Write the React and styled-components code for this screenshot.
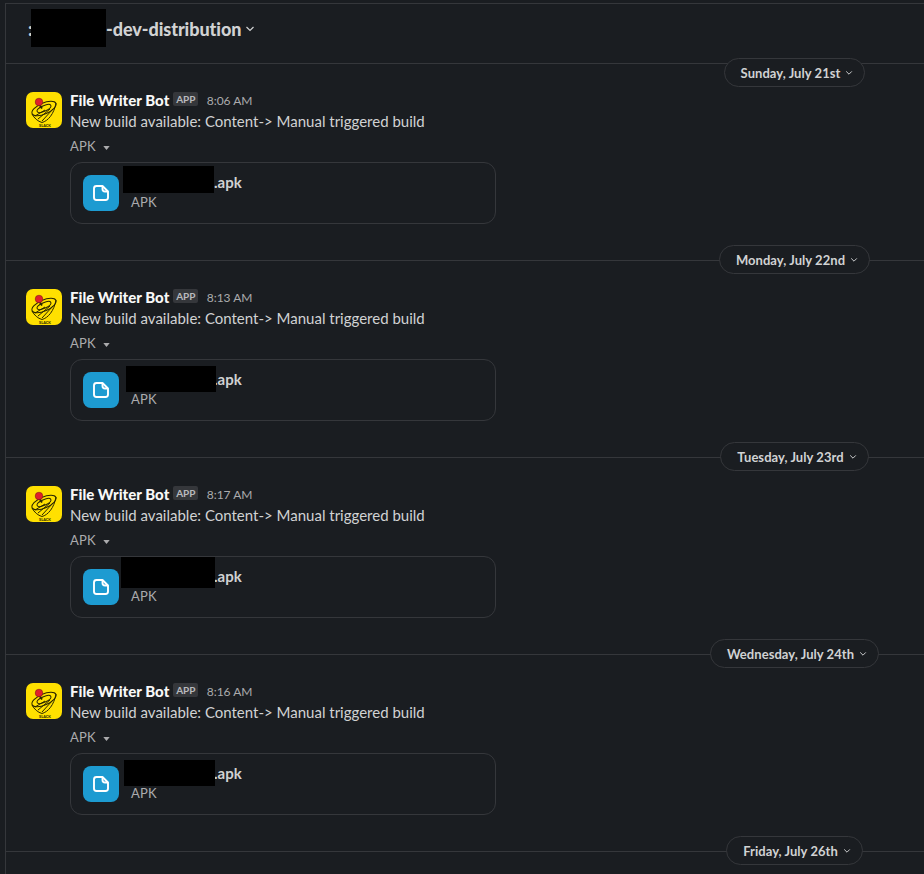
import React from 'react';
import styled, { createGlobalStyle } from 'styled-components';

const GlobalStyle = createGlobalStyle`
  html, body {
    margin: 0;
    padding: 0;
    background: #1a1d21;
  }
  body {
    font-family: Lato, "Noto Sans", sans-serif;
    color: #d1d2d3;
  }
`;

const Page = styled.div`
  width: 924px;
  height: 874px;
  overflow: hidden;
  background: #1a1d21;
  padding-top: 3px;
  box-sizing: border-box;
`;

const Frame = styled.div`
  height: 100%;
  margin-left: 5px;
  border-top: 1px solid #35373b;
  border-left: 1px solid #35373b;
`;

const Header = styled.div`
  display: flex;
  align-items: center;
  box-sizing: border-box;
  height: 59px;
  padding: 0 0 10px 22px;
  font-size: 18px;
  font-weight: 900;
  letter-spacing: -0.06px;
  color: #d1d2d3;
`;

const HeaderName = styled.span`
  position: relative;
  display: inline-block;
  width: 78px;
`;

const Redaction = styled.span`
  position: absolute;
  left: ${(p) => p.$left}px;
  top: ${(p) => p.$top}px;
  width: ${(p) => p.$width}px;
  height: ${(p) => p.$height}px;
  background: #000;
`;

const HeaderCaret = styled.svg`
  width: 10px;
  height: 10px;
  margin-left: 4px;
  margin-top: 1px;
`;

const DayRow = styled.div`
  display: flex;
  justify-content: center;
  align-items: flex-start;
  width: 1577px;
  height: 1px;
  background: #35373b;
`;

const DayPill = styled.div`
  position: relative;
  z-index: 1;
  display: flex;
  align-items: center;
  flex-shrink: 0;
  height: 29px;
  margin-top: ${(p) => (p.$stuck ? '-5px' : '-15px')};
  padding: 0 11px 0 16px;
  box-sizing: border-box;
  background: #1a1d21;
  border: 1px solid #35373b;
  border-radius: 15px;
  font-size: 13px;
  font-weight: 700;
  letter-spacing: 0.05px;
  color: #d1d2d3;
`;

const PillCaret = styled.svg`
  width: 8px;
  height: 8px;
  margin-left: 5px;
`;

const Message = styled.div`
  display: flex;
  padding: 28px 20px 36px 20px;
`;

const AvatarBox = styled.svg`
  width: 36px;
  height: 36px;
  flex-shrink: 0;
  margin-right: 8px;
`;

const Body = styled.div`
  display: flex;
  flex-direction: column;
`;

const MetaRow = styled.div`
  display: flex;
  align-items: center;
  height: 18px;
  margin-top: -2px;
`;

const BotName = styled.span`
  margin-top: 2px;
  font-size: 15px;
  font-weight: 900;
  letter-spacing: 0.02px;
  color: #f8f8f8;
`;

const AppBadge = styled.span`
  display: inline-flex;
  align-items: center;
  justify-content: center;
  width: 25px;
  height: 14px;
  margin-left: 4px;
  border-radius: 2px;
  background: #35373b;
  font-size: 10px;
  font-weight: 700;
  color: #b9babd;
`;

const Time = styled.span`
  margin-left: 8.5px;
  margin-top: 2px;
  font-size: 12px;
  letter-spacing: -0.05px;
  color: #ababad;
`;

const MessageText = styled.div`
  margin-top: 2px;
  font-size: 15px;
  line-height: 22px;
  color: #d1d2d3;
`;

const AttachLabel = styled.div`
  display: flex;
  align-items: center;
  height: 20px;
  margin-top: 4px;
  font-size: 13px;
  letter-spacing: 0.15px;
  color: #ababad;
`;

const LabelCaret = styled.svg`
  width: 7px;
  height: 4px;
  margin-left: 7px;
  margin-top: 3px;
`;

const FileCard = styled.div`
  display: flex;
  align-items: center;
  box-sizing: border-box;
  width: 426px;
  height: 62px;
  margin-top: 6px;
  padding-left: 12px;
  border: 1px solid #35373b;
  border-radius: 12px;
`;

const FileIconBox = styled.div`
  display: flex;
  align-items: center;
  justify-content: center;
  width: 36px;
  height: 36px;
  border-radius: 8px;
  background: #1d9bd1;
`;

const FileInfo = styled.div`
  display: flex;
  flex-direction: column;
  margin: 0 0 2px 12px;
`;

const FileName = styled.div`
  position: relative;
  display: flex;
  height: 20px;
  line-height: 18px;
  font-size: 15px;
  font-weight: 700;
  color: #d1d2d3;
`;

const HiddenName = styled.span`
  display: inline-block;
  width: ${(p) => p.$width}px;
`;

const FileType = styled.div`
  height: 18px;
  line-height: 18px;
  font-size: 13px;
  letter-spacing: 0.15px;
  color: #ababad;
`;

function Chevron() {
  return <path d="M1.5 3 L5 6.5 L8.5 3" fill="none" stroke="currentColor" strokeWidth="1.2" />;
}

function BotAvatar() {
  return (
    <AvatarBox viewBox="0 0 36 36">
      <rect width="36" height="36" rx="7" fill="#ffe000" />
      <g fill="none" stroke="#2a2600" strokeWidth="1">
        <ellipse cx="18" cy="16.5" rx="13" ry="5.5" transform="rotate(-24 18 16.5)" />
        <ellipse cx="18" cy="16.5" rx="7.5" ry="2.8" transform="rotate(-24 18 16.5)" />
        <path d="M6 22 C8 26 12 29.5 16 30.5 C22 29 28 22 30 11" />
        <path d="M9 24 L19 18 M12 27 L24 17 M16 29 L27 17" />
        <path d="M13 12 L16 16.5" strokeWidth="1.8" />
      </g>
      <circle cx="13" cy="10" r="3.8" fill="#e0202a" stroke="#6a1515" strokeWidth="0.5" />
      <text x="19" y="34.5" textAnchor="middle" fontSize="3.8" fontWeight="900" fontFamily="Lato, sans-serif" fill="#2a2600">SLACK</text>
    </AvatarBox>
  );
}

function FileGlyph() {
  return (
    <svg width="18" height="18" viewBox="0 0 18 18" fill="none" stroke="#fff" strokeWidth="1.9" strokeLinejoin="round">
      <path d="M4.5 2 H10.5 L16 7.5 V13.5 A2.5 2.5 0 0 1 13.5 16 H4.5 A2.5 2.5 0 0 1 2 13.5 V4.5 A2.5 2.5 0 0 1 4.5 2 Z" />
      <path d="M10.5 2 V5 A2.5 2.5 0 0 0 13 7.5 H16" />
    </svg>
  );
}

const days = [
  { label: 'Sunday, July 21st', time: '8:06 AM', redact: { left: -8, top: -7, width: 91, height: 27 } },
  { label: 'Monday, July 22nd', time: '8:13 AM', redact: { left: -5, top: -4, width: 90, height: 26 } },
  { label: 'Tuesday, July 23rd', time: '8:17 AM', redact: { left: -10, top: -10, width: 94, height: 31 } },
  { label: 'Wednesday, July 24th', time: '8:16 AM', redact: { left: -7, top: -4, width: 91, height: 26 } },
];

function Day({ day, stuck }) {
  return (
    <>
      <DayRow>
        <DayPill $stuck={stuck}>
          {day.label}
          <PillCaret viewBox="0 0 10 10" color="#d1d2d3"><Chevron /></PillCaret>
        </DayPill>
      </DayRow>
      <Message>
        <BotAvatar />
        <Body>
          <MetaRow>
            <BotName>File Writer Bot</BotName>
            <AppBadge>APP</AppBadge>
            <Time>{day.time}</Time>
          </MetaRow>
          <MessageText>New build available: Content-&gt; Manual triggered build</MessageText>
          <AttachLabel>
            APK
            <LabelCaret viewBox="0 0 8 5"><path d="M0 0 H8 L4 5 Z" fill="#ababad" /></LabelCaret>
          </AttachLabel>
          <FileCard>
            <FileIconBox><FileGlyph /></FileIconBox>
            <FileInfo>
              <FileName>
                <HiddenName $width={83} />
                <Redaction $left={day.redact.left} $top={day.redact.top} $width={day.redact.width} $height={day.redact.height} />
                .apk
              </FileName>
              <FileType>APK</FileType>
            </FileInfo>
          </FileCard>
        </Body>
      </Message>
    </>
  );
}

export default function App() {
  return (
    <Page>
      <GlobalStyle />
      <Frame>
        <Header>
          <HeaderName>
            :
            <Redaction $left={3} $top={-9} $width={75} $height={38} />
          </HeaderName>
          -dev-distribution
          <HeaderCaret viewBox="0 0 10 10" color="#d1d2d3"><Chevron /></HeaderCaret>
        </Header>
        {days.map((day, i) => (
          <Day key={day.label} day={day} stuck={i === 0} />
        ))}
        <DayRow>
          <DayPill>
            Friday, July 26th
            <PillCaret viewBox="0 0 10 10" color="#d1d2d3"><Chevron /></PillCaret>
          </DayPill>
        </DayRow>
      </Frame>
    </Page>
  );
}
